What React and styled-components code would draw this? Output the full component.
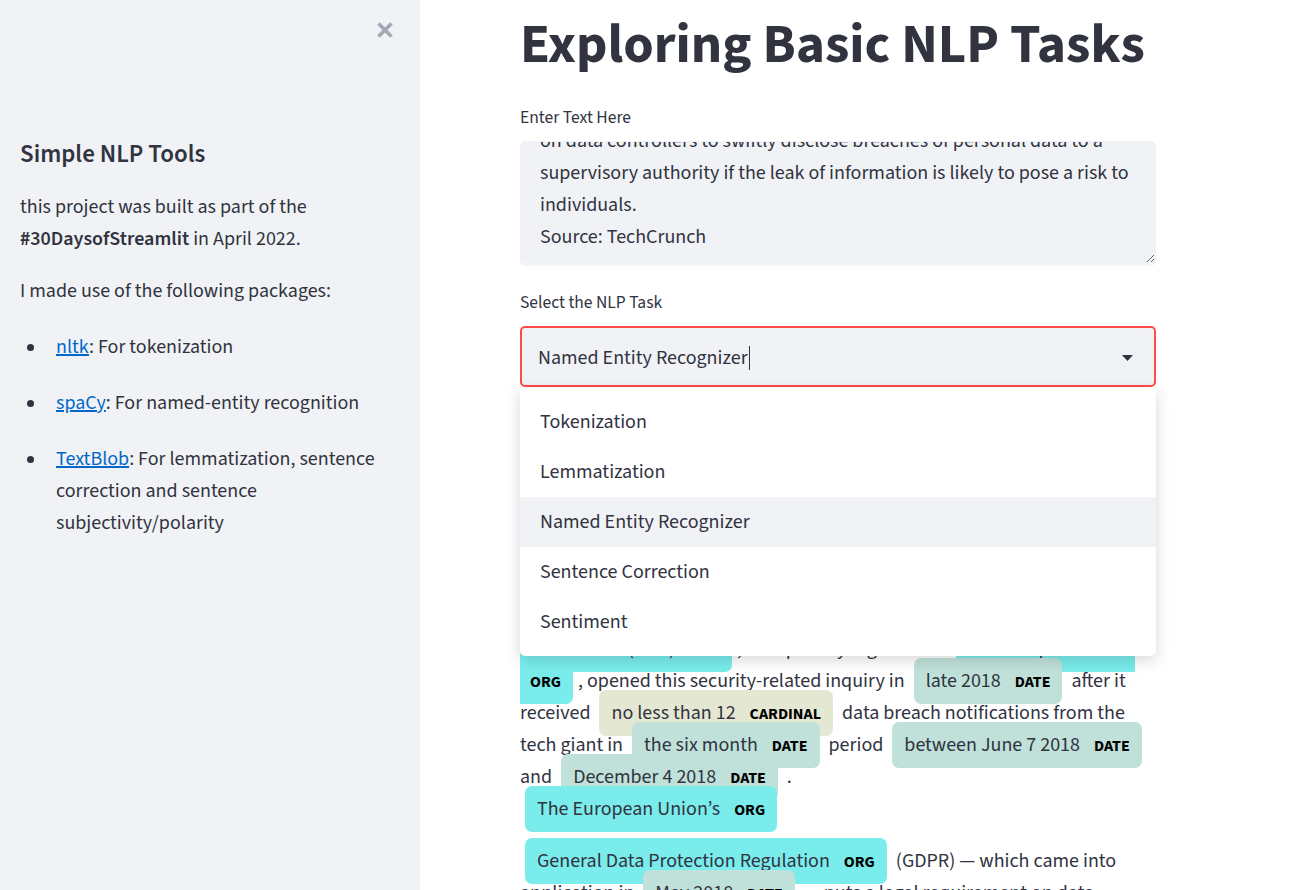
import React, { useEffect, useRef } from "react";
import styled, { createGlobalStyle } from "styled-components";

const GlobalStyle = createGlobalStyle`
  * { box-sizing: border-box; }
  html, body { margin: 0; height: 100%; }
  body {
    font-family: "Source Sans 3", "Source Sans Pro", "Noto Sans", sans-serif;
    color: #31333f;
    background: #ffffff;
    overflow: hidden;
  }
`;

const ARTICLE = `Meta, the parent company of Facebook, has been fined €17 million by Ireland's privacy watchdog over a series of historical security breaches that were reported by the social media giant back in 2018. The regulator said its inquiry examined whether the company had appropriate measures in place to protect users' data.
The Irish Data Protection Commission (DPC), lead privacy regulator in the European Union, opened this security-related inquiry in late 2018 after it received no less than 12 data breach notifications from the tech giant in the six month period between June 7 2018 and December 4 2018.
The European Union's
General Data Protection Regulation (GDPR) — which came into application in May 2018 — puts a legal requirement
on data controllers to swiftly disclose breaches of personal data to a supervisory authority if the leak of information is likely to pose a risk to individuals.
Source: TechCrunch`;

const TASKS = [
  "Tokenization",
  "Lemmatization",
  "Named Entity Recognizer",
  "Sentence Correction",
  "Sentiment",
];

const ENT_COLORS = {
  ORG: "#7aecec",
  DATE: "#bfe1d9",
  CARDINAL: "#e4e7d2",
  MONEY: "#e4e7d2",
  GPE: "#feca74",
};

// displacy-like output: strings are plain text, pairs are [text, label], "BR" is a line break
const ENTITY_PARAGRAPHS = [
  [
    ["Meta", "ORG"],
    ", the parent company of ",
    ["Facebook", "ORG"],
    ", has been fined ",
    ["€17 million", "MONEY"],
    " by ",
    ["Ireland", "GPE"],
    "’s privacy watchdog over a series of historical security breaches that were reported by the social media giant back in ",
    ["2018", "DATE"],
    ". The regulator said its inquiry examined whether the company had appropriate measures in place to protect users’ data.",
  ],
  [
    ["The Irish Data Protection", "ORG", "Commission (DPC)"],
    ", lead privacy regulator in ",
    ["the European Union", "ORG"],
    ", opened this security-related inquiry in ",
    ["late 2018", "DATE"],
    " after it received ",
    ["no less than 12", "CARDINAL"],
    " data breach notifications from the tech giant in ",
    ["the six month", "DATE"],
    " period ",
    ["between June 7 2018", "DATE"],
    " and ",
    ["December 4 2018", "DATE"],
    " .",
    "BR",
    ["The European Union’s", "ORG"],
  ],
  [
    ["General Data Protection Regulation", "ORG"],
    " (GDPR) — which came into application in ",
    ["May 2018", "DATE"],
    " — puts a legal requirement on data controllers to swiftly disclose breaches of personal data to a supervisory authority if the leak of information is likely to pose a risk to individuals.",
  ],
];

/* ---------- layout ---------- */

const Page = styled.div`
  display: flex;
  height: 100vh;
  overflow: hidden;
`;

const Sidebar = styled.aside`
  width: 420px;
  flex-shrink: 0;
  background: #f0f2f6;
  padding: 15px 20px 0;
  display: flex;
  flex-direction: column;
`;

const SidebarTop = styled.div`
  display: flex;
  justify-content: flex-end;
  height: 30px;
`;

const CloseButton = styled.button`
  width: 30px;
  height: 30px;
  padding: 0;
  border: none;
  background: transparent;
  display: flex;
  align-items: center;
  justify-content: center;
  cursor: pointer;
`;

const SidebarBody = styled.div`
  margin-top: 94px;
  display: flex;
  flex-direction: column;
  font-size: 20px;
  line-height: 32px;
`;

const SideTitle = styled.h3`
  margin: 0 0 22px;
  font-size: 25px;
  font-weight: 600;
  line-height: 30px;
`;

const Para = styled.p`
  margin: 0 0 20px;
`;

const Strong = styled.strong`
  font-weight: 600;
`;

const PackageList = styled.ul`
  list-style: none;
  margin: 4px 0 0;
  padding: 0;
  display: flex;
  flex-direction: column;
  gap: 24px;
`;

const PackageItem = styled.li`
  display: grid;
  grid-template-columns: 36px 1fr;
`;

const Dot = styled.span`
  width: 7px;
  height: 7px;
  border-radius: 50%;
  background: #31333f;
  margin: 13px 0 0 7px;
`;

const Link = styled.a`
  color: rgb(0, 104, 201);
  text-decoration: underline;
`;

const Main = styled.main`
  flex: 1;
  padding-left: 100px;
`;

const Content = styled.div`
  width: 636px;
  display: flex;
  flex-direction: column;
`;

const Title = styled.h1`
  margin: 0;
  padding-top: 12px;
  font-size: 55px;
  font-weight: 700;
  line-height: 66px;
`;

const FieldLabel = styled.label`
  display: block;
  margin-top: ${(p) => p.$top}px;
  margin-bottom: 8px;
  padding-top: 1px;
  font-size: 17.5px;
  line-height: 30px;
`;

const TextAreaBox = styled.div`
  border: 1px solid #f0f2f6;
  border-bottom: 3px solid #f4f5f8;
  border-radius: 5px;
  background: #f0f2f6;
  overflow: hidden;
`;

const TextArea = styled.textarea`
  display: block;
  width: 100%;
  height: 121px;
  padding: 13px 20px 10px 19px;
  border: none;
  outline: none;
  resize: vertical;
  background: #f0f2f6;
  color: #31333f;
  font-family: inherit;
  font-size: 20px;
  line-height: 32px;
  scrollbar-width: none;
  &::-webkit-scrollbar {
    display: none;
  }
`;

const SelectWrap = styled.div`
  position: relative;
  z-index: 5;
`;

const SelectControl = styled.div`
  height: 61px;
  border: 2px solid #ff4b4b;
  border-radius: 5px;
  background: #f0f2f6;
  display: flex;
  align-items: center;
  justify-content: space-between;
  padding: 2px 21px 0 16px;
  font-size: 20px;
`;

const SelectValue = styled.span`
  display: flex;
  align-items: center;
`;

const Caret = styled.span`
  width: 1px;
  height: 24px;
  margin-left: 1px;
  background: #31333f;
`;

const Menu = styled.ul`
  position: absolute;
  top: calc(100% + 1px);
  left: 0;
  right: 0;
  margin: 0;
  padding: 9px 0;
  list-style: none;
  background: #ffffff;
  border-radius: 0 0 5px 5px;
  box-shadow: rgba(0, 0, 0, 0.16) 0px 4px 16px;
`;

const MenuItem = styled.li`
  height: 50px;
  line-height: 50px;
  padding: 0 20px;
  font-size: 20px;
  color: #31333f;
  background: ${(p) => (p.$active ? "#f0f2f6" : "transparent")};
`;

const Entities = styled.div`
  margin-top: 34px;
  font-size: 20px;
  line-height: 32px;
  direction: ltr;
`;

const EntityPara = styled.p`
  margin: 0 0 20px;
`;

const Mark = styled.mark`
  background: ${(p) => p.$bg};
  color: inherit;
  padding: 0.45em 0.6em;
  margin: 0 0.25em;
  line-height: 1;
  border-radius: 0.35em;
`;

const EntLabel = styled.span`
  font-size: 0.8em;
  font-weight: 700;
  color: #000;
  line-height: 1;
  border-radius: 0.35em;
  vertical-align: middle;
  margin-left: 10px;
`;

/* ---------- parts ---------- */

function CloseIcon() {
  return (
    <svg width="18" height="18" viewBox="0 0 18 18">
      <path
        d="M2.5 2.5 L15.5 15.5 M15.5 2.5 L2.5 15.5"
        stroke="#a3a8b4"
        strokeWidth="3.6"
        fill="none"
      />
    </svg>
  );
}

function ArrowDown() {
  return (
    <svg width="11" height="6" viewBox="0 0 11 6">
      <path d="M0 0 H11 L5.5 6 Z" fill="#31333f" />
    </svg>
  );
}

function Entity({ text, type, rest }) {
  return (
    <Mark $bg={ENT_COLORS[type]}>
      {text}
      {rest && (
        <>
          <br />
          {rest}
        </>
      )}{" "}
      <EntLabel>{type}</EntLabel>
    </Mark>
  );
}

export default function App() {
  const areaRef = useRef(null);

  useEffect(() => {
    if (areaRef.current) {
      areaRef.current.scrollTop = areaRef.current.scrollHeight;
    }
  }, []);

  return (
    <>
      <GlobalStyle />
      <Page>
        <Sidebar>
          <SidebarTop>
            <CloseButton aria-label="Close sidebar">
              <CloseIcon />
            </CloseButton>
          </SidebarTop>
          <SidebarBody>
            <SideTitle>Simple NLP Tools</SideTitle>
            <Para>
              this project was built as part of the <Strong>#30DaysofStreamlit</Strong> in April 2022.
            </Para>
            <Para>I made use of the following packages:</Para>
            <PackageList>
              <PackageItem>
                <Dot />
                <span>
                  <Link href="#nltk">nltk</Link>: For tokenization
                </span>
              </PackageItem>
              <PackageItem>
                <Dot />
                <span>
                  <Link href="#spacy">spaCy</Link>: For named-entity recognition
                </span>
              </PackageItem>
              <PackageItem>
                <Dot />
                <span>
                  <Link href="#textblob">TextBlob</Link>: For lemmatization, sentence correction and
                  sentence subjectivity/polarity
                </span>
              </PackageItem>
            </PackageList>
          </SidebarBody>
        </Sidebar>

        <Main>
          <Content>
            <Title>Exploring Basic NLP Tasks</Title>

            <FieldLabel $top={24}>Enter Text Here</FieldLabel>
            <TextAreaBox>
              <TextArea ref={areaRef} defaultValue={ARTICLE} />
            </TextAreaBox>

            <FieldLabel $top={21}>Select the NLP Task</FieldLabel>
            <SelectWrap>
              <SelectControl>
                <SelectValue>
                  Named Entity Recognizer
                  <Caret />
                </SelectValue>
                <ArrowDown />
              </SelectControl>
              <Menu role="listbox">
                {TASKS.map((t) => (
                  <MenuItem key={t} $active={t === "Named Entity Recognizer"}>
                    {t}
                  </MenuItem>
                ))}
              </Menu>
            </SelectWrap>

            <Entities>
              {ENTITY_PARAGRAPHS.map((para, i) => (
                <EntityPara key={i}>
                  {para.map((seg, j) =>
                    seg === "BR" ? (
                      <br key={j} />
                    ) : typeof seg === "string" ? (
                      <React.Fragment key={j}>{seg}</React.Fragment>
                    ) : (
                      <Entity key={j} text={seg[0]} type={seg[1]} rest={seg[2]} />
                    )
                  )}
                </EntityPara>
              ))}
            </Entities>
          </Content>
        </Main>
      </Page>
    </>
  );
}
